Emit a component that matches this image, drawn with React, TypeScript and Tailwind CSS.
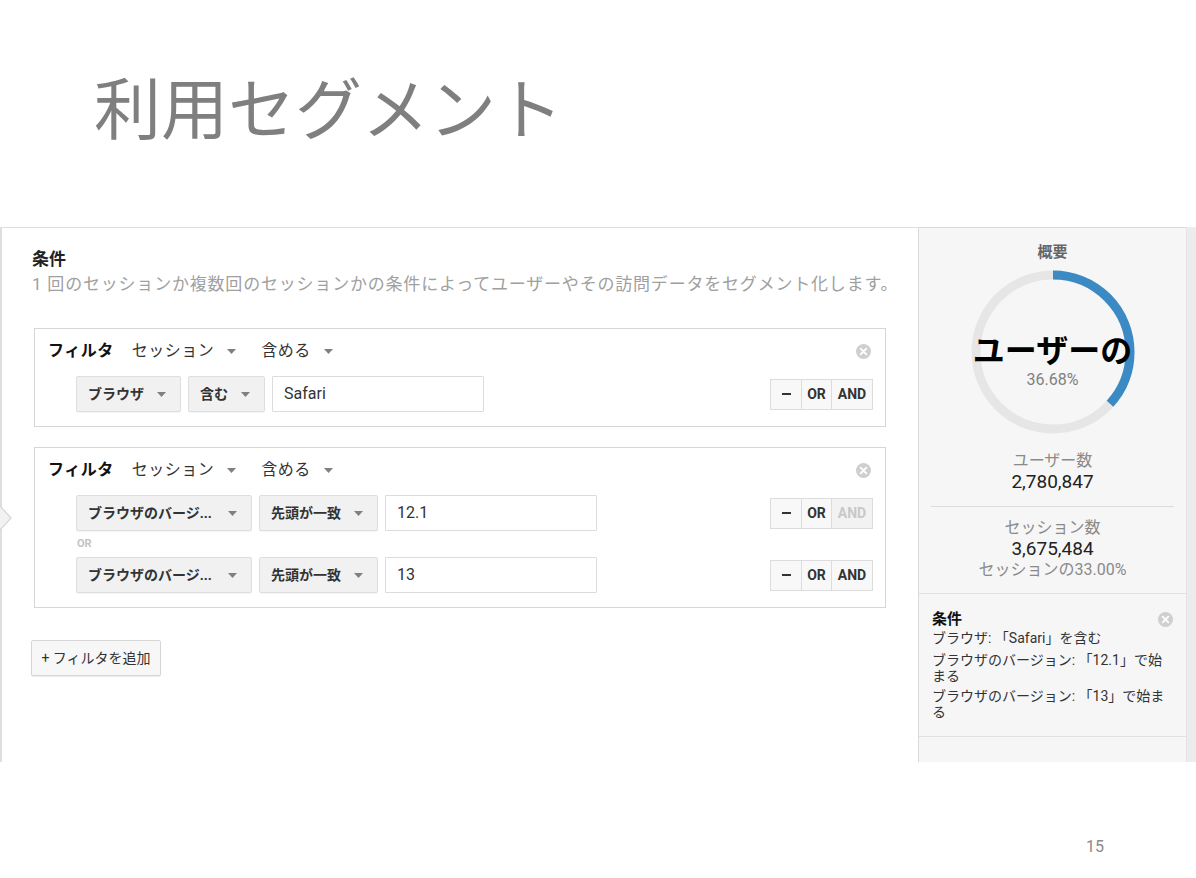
import React from "react";

const font = { fontFamily: 'Roboto, "Noto Sans CJK JP", sans-serif' };

function Caret({ className = "" }: { className?: string }) {
  return (
    <svg width="9" height="5" viewBox="0 0 9 5" className={className}>
      <path d="M0 0 L9 0 L4.5 5 Z" fill="#808080" />
    </svg>
  );
}

function CloseDot() {
  return (
    <svg width="15" height="15" viewBox="0 0 16 16">
      <circle cx="8" cy="8" r="8" fill="#cfcfcf" />
      <path d="M5 5 L11 11 M11 5 L5 11" stroke="#fff" strokeWidth="2" strokeLinecap="round" />
    </svg>
  );
}

function Select({ label, width }: { label: string; width: string }) {
  return (
    <div className={`${width} h-[36px] flex items-center justify-between pl-[11px] pr-[14px] bg-[#f1f1f1] border border-[#dedede] rounded-[2px] shadow-[0_1px_0_rgba(0,0,0,0.04)]`}>
      <span className="text-[14px] font-bold text-[#333] whitespace-nowrap">{label}</span>
      <Caret />
    </div>
  );
}

function Input({ value }: { value: string }) {
  return (
    <div className="w-[212px] h-[36px] flex items-center px-[11px] bg-white border border-[#dcdcdc] rounded-[1px]">
      <span className="text-[16px] text-[#333]">{value}</span>
    </div>
  );
}

function Buttons({ andDisabled = false }: { andDisabled?: boolean }) {
  return (
    <div className="ml-auto flex h-[31px] border border-[#dcdcdc] bg-[#f8f8f8] text-[14px] font-bold">
      <div className="w-[31px] flex items-center justify-center text-[#333] border-r border-[#dcdcdc]">
        <span className="block w-[9px] h-[2px] bg-[#333]" />
      </div>
      <div className="w-[30px] flex items-center justify-center text-[#333] border-r border-[#dcdcdc]">OR</div>
      <div className={`w-[40px] flex items-center justify-center ${andDisabled ? "text-[#c8c8c8] bg-[#f2f2f2]" : "text-[#333]"}`}>AND</div>
    </div>
  );
}

function FilterHeader() {
  return (
    <div className="flex items-center h-[42px] pl-[13px] pr-[13px] pt-[2px]">
      <span className="text-[16px] font-bold text-[#111] tracking-[0.5px]">フィルタ</span>
      <span className="ml-[18px] text-[16px] text-[#333] tracking-[0.5px]">セッション</span>
      <Caret className="ml-[13px]" />
      <span className="ml-[25px] text-[16px] text-[#333] tracking-[0.5px]">含める</span>
      <Caret className="ml-[13px]" />
      <div className="ml-auto mr-[1px]">
        <CloseDot />
      </div>
    </div>
  );
}

function Donut() {
  const r = 77;
  const c = 2 * Math.PI * r;
  const pct = 0.3668;
  return (
    <div className="relative w-[166px] h-[166px]">
      <svg width="166" height="166" viewBox="0 0 166 166" className="absolute inset-0">
        <circle cx="83" cy="83" r={r} fill="none" stroke="#e6e6e6" strokeWidth="9" />
        <circle
          cx="83"
          cy="83"
          r={r}
          fill="none"
          stroke="#3b8ac4"
          strokeWidth="9"
          strokeDasharray={`${c * pct} ${c}`}
          transform="rotate(-90 83 83)"
        />
      </svg>
      <div className="absolute inset-0 flex flex-col items-center justify-center pt-[18px]">
        <span className="whitespace-nowrap text-[32px] font-bold leading-none text-black">ユーザーの</span>
        <span className="mt-[5px] text-[16px] leading-none text-[#808080]">36.68%</span>
      </div>
    </div>
  );
}

export default function App() {
  return (
    <div className="w-[1196px] h-[878px] bg-white flex flex-col overflow-hidden" style={font}>
      {/* slide title */}
      <div className="h-[227px] pl-[94px] pt-[78px]">
        <h1 className="text-[67px] leading-none text-[#7f7f7f] font-normal">利用セグメント</h1>
      </div>

      {/* screenshot */}
      <div className="h-[535px] flex">
        {/* left panel */}
        <div className="relative w-[918px] border-t border-l-2 border-[#dedede] bg-white pt-[20px]">
          <div className="absolute left-[-2px] top-[277px] w-0 h-0 border-y-[13px] border-y-transparent border-l-[12px] border-l-[#d9d9d9]" />
          <div className="absolute left-[-2px] top-[279px] w-0 h-0 border-y-[11px] border-y-transparent border-l-[10px] border-l-[#f2f2f2]" />

          <div className="pl-[30px]">
            <div className="text-[17px] font-bold text-[#222] leading-[22px]">条件</div>
            <div className="mt-[3px] text-[17px] text-[#a0a0a0] leading-[22px] whitespace-nowrap tracking-[0.8px]">
              1 回のセッションか複数回のセッションかの条件によってユーザーやその訪問データをセグメント化します。
            </div>
          </div>

          <div className="ml-[32px] mt-[33px] w-[852px] flex flex-col gap-[20px]">
            <div className="h-[99px] border border-[#d6d6d6] bg-white">
              <FilterHeader />
              <div className="flex items-center gap-[7px] pl-[41px] pr-[12px] mt-[5px]">
                <Select label="ブラウザ" width="w-[105px]" />
                <Select label="含む" width="w-[77px]" />
                <Input value="Safari" />
                <Buttons />
              </div>
            </div>

            <div className="h-[161px] border border-[#d6d6d6] bg-white">
              <FilterHeader />
              <div className="flex items-center gap-[7px] pl-[41px] pr-[12px] mt-[5px]">
                <Select label="ブラウザのバージ..." width="w-[176px]" />
                <Select label="先頭が一致" width="w-[119px]" />
                <Input value="12.1" />
                <Buttons andDisabled />
              </div>
              <div className="pl-[42px] h-[26px] flex items-center text-[11px] font-bold text-[#c4c4c4]">OR</div>
              <div className="flex items-center gap-[7px] pl-[41px] pr-[12px]">
                <Select label="ブラウザのバージ..." width="w-[176px]" />
                <Select label="先頭が一致" width="w-[119px]" />
                <Input value="13" />
                <Buttons />
              </div>
            </div>
          </div>

          <div className="ml-[29px] mt-[32px] w-[130px] h-[36px] flex items-center justify-center border border-[#d6d6d6] rounded-[2px] bg-[#f7f7f7] text-[14px] text-[#333] shadow-[0_1px_1px_rgba(0,0,0,0.08)]">
            + フィルタを追加
          </div>
        </div>

        {/* right panel */}
        <div className="w-[268px] border-t border-l border-[#dadada] bg-[#f6f6f6] flex flex-col">
          <div className="flex flex-col items-center pt-[13px] border-b border-[#e2e2e2] pb-[13px]">
            <div className="text-[15px] font-bold text-[#666] leading-[22px]">概要</div>
            <div className="mt-[6px]">
              <Donut />
            </div>
            <div className="mt-[16px] text-[16px] text-[#8a8a8a] leading-[20px]">ユーザー数</div>
            <div className="text-[19px] text-[#222] leading-[22px]">2,780,847</div>
            <div className="mt-[13px] mb-[11px] w-[243px] h-px bg-[#dcdcdc]" />
            <div className="text-[16px] text-[#8a8a8a] leading-[20px]">セッション数</div>
            <div className="text-[19px] text-[#222] leading-[22px]">3,675,484</div>
            <div className="text-[16px] text-[#8a8a8a] leading-[20px]">セッションの33.00%</div>
          </div>

          <div className="px-[13px] pt-[15px] pb-[16px] border-b border-[#e2e2e2] text-[14px] text-[#333] leading-[16px]">
            <div className="flex items-center justify-between">
              <span className="text-[15px] font-bold text-[#111] leading-[20px]">条件</span>
              <CloseDot />
            </div>
            <div className="mt-[1px]">ブラウザ: 「Safari」を含む</div>
            <div className="mt-[6px]">ブラウザのバージョン: 「12.1」で始まる</div>
            <div className="mt-[4px]">ブラウザのバージョン: 「13」で始まる</div>
          </div>
          <div className="flex-1" />
        </div>

        <div className="w-[10px] bg-[#ececec] border-l border-[#e4e4e4]" />
      </div>

      {/* page number */}
      <div className="flex-1">
        <div className="pl-[1086px] pt-[77px] text-[16px] text-[#8a8a8a] leading-none">15</div>
      </div>
    </div>
  );
}
